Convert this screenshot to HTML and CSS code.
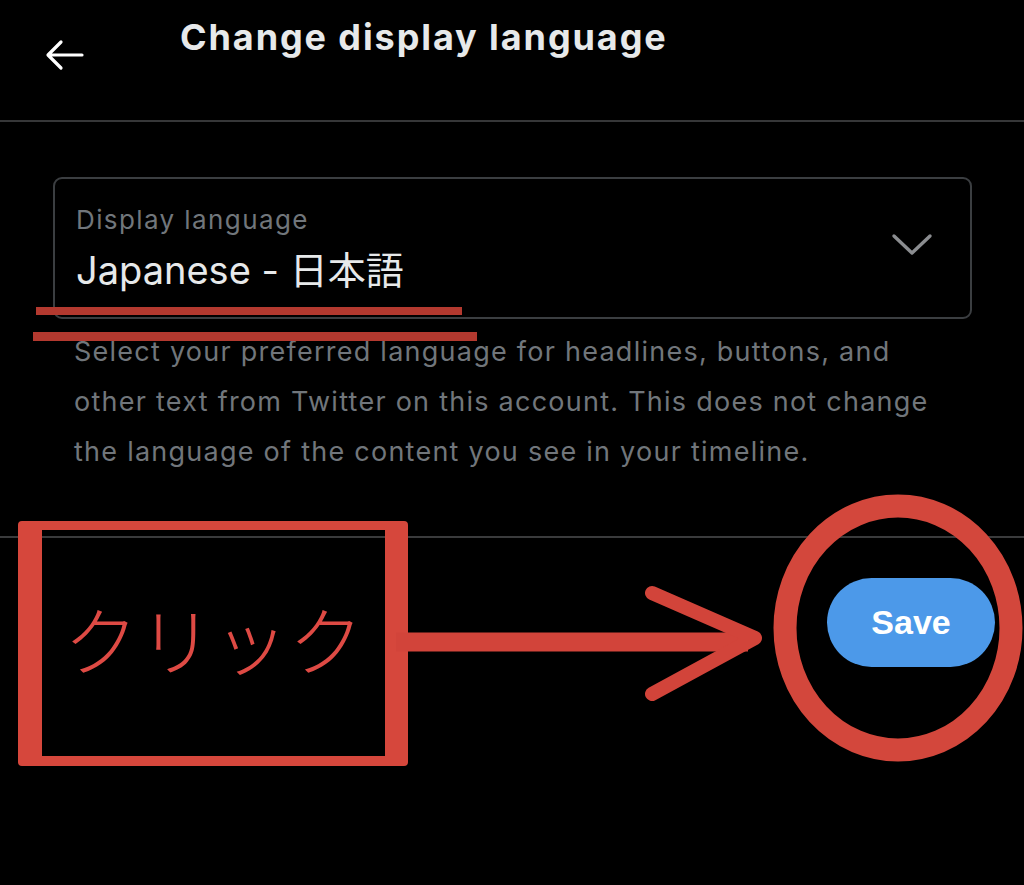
FILE: index.html
```html
<!DOCTYPE html>
<html lang="en">
<head>
    <meta charset="UTF-8">
    <meta name="viewport" content="width=device-width, initial-scale=1.0">
    <title>Change display language</title>
    <link rel="stylesheet" href="styles.css">
</head>
<body>

<div class="page">
    <header class="topbar">
        <button class="back" aria-label="Back">
            <svg width="40" height="34" viewBox="0 0 40 34">
                <path d="M37 16 H4 M16 3 L3 16 L16 29" fill="none" stroke="#fff" stroke-width="3.2" stroke-linecap="round" stroke-linejoin="round"/>
            </svg>
        </button>
        <h1 class="title">Change display language</h1>
    </header>

    <section class="settings">
        <div class="select">
            <div class="select-text">
                <div class="select-label">Display language</div>
                <div class="select-value">Japanese - 日本語</div>
            </div>
            <svg class="chevron" width="44" height="26" viewBox="0 0 44 26">
                <path d="M4 4 L22 21 L40 4" fill="none" stroke="#8b8d90" stroke-width="3.4" stroke-linecap="round" stroke-linejoin="round"/>
            </svg>
        </div>
        <p class="hint">Select your preferred language for headlines, buttons, and other text from Twitter on this account. This does not change the language of the content you see in your timeline.</p>
    </section>

    <footer class="actions">
        <button class="save">Save</button>
    </footer>

    <!-- annotations drawn over the screenshot -->
    <div class="mark-box">
        <span class="mark-text">クリック</span>
    </div>
    <svg class="marks" width="1024" height="885" viewBox="0 0 1024 885">
        <rect x="36" y="307" width="426" height="8" fill="#b3392f"/>
        <rect x="33" y="332" width="444" height="9" fill="#b3392f"/>
        <path d="M396 642 H748" stroke="#d2443a" stroke-width="19"/>
        <path d="M652 593 L755 638 L652 694" fill="none" stroke="#d2443a" stroke-width="14" stroke-linecap="round" stroke-linejoin="round"/>
        <ellipse cx="898" cy="628" rx="113" ry="122" fill="none" stroke="#d3473c" stroke-width="23"/>
    </svg>
</div>

</body>
</html>
```

FILE: styles.css
```css
* {
    box-sizing: border-box;
}
body {
    margin: 0;
    background-color: #000;
    font-family: Inter, "Noto Sans CJK JP", sans-serif;
}
.page {
    position: relative;
    width: 1024px;
    height: 885px;
    overflow: hidden;
}
.topbar {
    display: flex;
    align-items: flex-start;
    height: 122px;
    border-bottom: 2px solid #363738;
}
.back {
    margin: 39px 0 0 45px;
    padding: 0;
    width: 40px;
    height: 34px;
    background: none;
    border: none;
}
.title {
    margin: 15px 0 0 95px;
    color: #e7e9ea;
    font-size: 36px;
    line-height: 44px;
    font-weight: 700;
    letter-spacing: 1.9px;
}
.settings {
    padding: 55px 52px 59px 53px;
    border-bottom: 2px solid #3a3b3c;
}
.select {
    display: flex;
    align-items: center;
    justify-content: space-between;
    height: 142px;
    padding: 0 36px 0 21px;
    border: 2px solid #3b3e41;
    border-radius: 9px;
}
.select-label {
    color: #71767b;
    font-size: 26px;
    line-height: 32px;
    letter-spacing: 1.4px;
}
.select-value {
    margin-top: 12px;
    color: #e7e9ea;
    font-size: 38px;
    line-height: 44px;
}
.chevron {
    margin-bottom: 6px;
}
.hint {
    margin: 8px 0 0 21px;
    color: #71767b;
    font-size: 27px;
    line-height: 50px;
    letter-spacing: 1.25px;
}
.actions {
    display: flex;
    justify-content: flex-end;
    padding: 40px 29px 0 0;
}
.save {
    width: 168px;
    height: 89px;
    background-color: #4c99e9;
    color: #fff;
    font-family: "Liberation Sans", Arial, sans-serif;
    font-size: 34px;
    font-weight: 700;
    border: none;
    border-radius: 45px;
}
.mark-box {
    position: absolute;
    left: 18px;
    top: 521px;
    width: 390px;
    height: 245px;
    display: flex;
    align-items: center;
    justify-content: center;
    padding-bottom: 12px;
    border-style: solid;
    border-color: #d6473c;
    border-width: 9px 23px 10px 24px;
    border-radius: 4px;
}
.mark-text {
    color: #de4a44;
    font-family: "Noto Sans CJK JP", sans-serif;
    font-size: 75px;
    font-weight: 300;
    line-height: 1;
}
.marks {
    position: absolute;
    left: 0;
    top: 0;
    pointer-events: none;
}
```
